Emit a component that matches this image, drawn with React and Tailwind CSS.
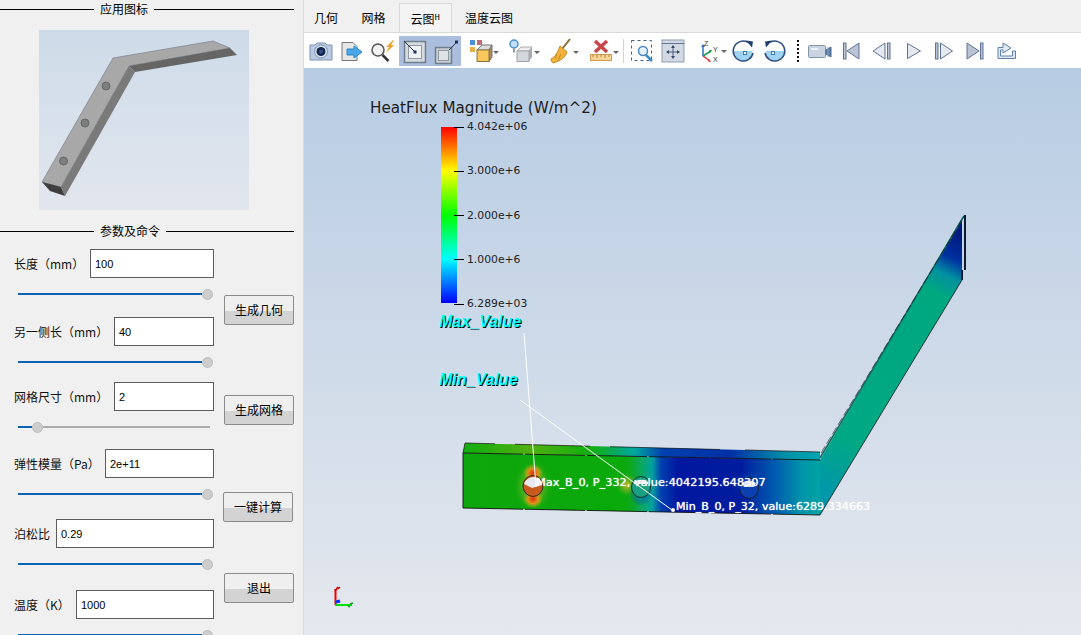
import React from 'react';

const cjk = '"Noto Sans CJK SC", "Liberation Sans", sans-serif';

const params = [
  { label: '长度（mm）', value: '100', inputWidth: 'w-[124px]', top: 'mt-[9px]' },
  { label: '另一侧长（mm）', value: '40', inputWidth: 'w-[100px]', top: 'mt-[17px]' },
  { label: '网格尺寸（mm）', value: '2', inputWidth: 'w-[100px]', top: 'mt-[14px]', low: true },
  { label: '弹性模量（Pa）', value: '2e+11', inputWidth: 'w-[109px]', top: 'mt-[16px]' },
  { label: '泊松比', value: '0.29', inputWidth: 'w-[158px]', top: 'mt-[19px]' },
  { label: '温度（K）', value: '1000', inputWidth: 'w-[138px]', top: 'mt-[20px]' },
];

const buttons = [
  { label: '生成几何', cls: 'mt-[55px]' },
  { label: '生成网格', cls: 'mt-[70px]' },
  { label: '一键计算', cls: 'mt-[67px] -ml-px' },
  { label: '退出', cls: 'mt-[51px]' },
];

const tabs = [
  { label: '几何', cls: 'w-[44px]' },
  { label: '网格', cls: 'w-[51px]' },
  { label: '云图', key: 'H', cls: 'w-[53px] h-[29px] bg-[#f4f4f4] border border-b-0 border-[#d9d9d9]' },
  { label: '温度云图', cls: 'w-[74px]' },
];

// toolbar icons are drawn in page coordinates, x and w give the slot
const Tool = ({ x, w, active, children }) => (
  <div className={`h-[30px] shrink-0 ${active ? 'bg-[#abbedd]' : ''}`} style={{ width: w }}>
    <svg width={w} height={30} viewBox={`${x} 36 ${w} 30`}>{children}</svg>
  </div>
);

const Caret = ({ x, y }) => <path d={`M${x} ${y}h6l-3 3z`} fill="#666" />;

const stepFill = '#b9c3d4';
const stepLine = '#5f7396';

const tools = [
  { x: 306, w: 30, icon: (
    <g>
      <path d="M310 45h5l2-2h8l2 2h5v15h-22z" fill="#b8cbe2" stroke="#7f93ad" />
      <circle cx="321" cy="51.500" r="6.500" fill="#dce6f2" stroke="#7d92ad" />
      <circle cx="321" cy="51.500" r="4.500" fill="#13254f" />
      <circle cx="321" cy="51.500" r="2" fill="#34508a" />
    </g>
  ) },
  { x: 336, w: 30, icon: (
    <g>
      <path d="M342 42.500h11l4 4v14h-15z" fill="#e6e6e6" stroke="#777" />
      <path d="M347 49h7v-3l8 6-8 6v-3h-7z" fill="#4aa6e6" stroke="#2a86c8" />
    </g>
  ) },
  { x: 366, w: 33, icon: (
    <g>
      <circle cx="378" cy="50" r="6" fill="#f2f2f2" stroke="#555" strokeWidth="1.500" />
      <path d="M382.500 55l6 6" stroke="#333" strokeWidth="2.500" />
      <path d="M393 40l-7 7h3l-3 6 8-8h-3l3-5z" fill="#f0a030" />
    </g>
  ) },
  { x: 399, w: 31, active: true, icon: (
    <g>
      <rect x="404.500" y="41.500" width="21" height="21" fill="#d5dadf" stroke="#6f7f90" strokeWidth="1.500" />
      <rect x="408.500" y="45.500" width="13" height="13" fill="#eef0f2" stroke="#8f9aa5" />
      <path d="M404 41l11 11" stroke="#24364f" />
      <rect x="413.500" y="50.500" width="3" height="3" fill="#14345f" />
    </g>
  ) },
  { x: 430, w: 31, active: true, icon: (
    <g>
      <rect x="435.500" y="47.500" width="16" height="16" fill="#c8ccd0" stroke="#6f7f90" strokeWidth="1.500" />
      <rect x="438.500" y="50.500" width="10" height="10" fill="#dfe2e4" stroke="#8f9aa5" />
      <path d="M449 50l8-8" stroke="#24364f" />
      <rect x="455" y="40.500" width="3" height="3" fill="#14345f" />
    </g>
  ) },
  { x: 461, w: 7 },
  { x: 468, w: 39, icon: (
    <g>
      <rect x="470" y="40" width="5" height="5" fill="#4c8fd6" />
      <rect x="477" y="40" width="5" height="5" fill="#c06a78" />
      <rect x="470" y="47" width="5" height="5" fill="#e8b04a" />
      <path d="M477 50l5-5h10l-3 5z" fill="#ddd" stroke="#777" />
      <path d="M492 45v12l-3 4.500v-11.500z" fill="#a98b5c" stroke="#777" />
      <rect x="477" y="50" width="12" height="11.500" fill="#f8c85c" stroke="#8c7440" />
      <Caret x={493} y={51} />
    </g>
  ) },
  { x: 507, w: 41, icon: (
    <g>
      <circle cx="514" cy="44" r="4" fill="#bfe0f8" stroke="#4a90d0" strokeWidth="1.500" />
      <path d="M514 48.500v4" stroke="#777" strokeWidth="1.500" />
      <path d="M517 51l4-4h11l-3 4z" fill="#eee" stroke="#aaa" />
      <rect x="517" y="51" width="12" height="10.500" fill="#d4d7dc" stroke="#a0a4aa" />
      <path d="M529 51l3-4v10l-3 4.500z" fill="#a8adb5" />
      <Caret x={534} y={51} />
    </g>
  ) },
  { x: 548, w: 38, icon: (
    <g>
      <path d="M570 39l-8 10" stroke="#8a6a3a" strokeWidth="2" />
      <path d="M560 46l7 6c-2 6-7 9-14 11-1-1-2-2-2-4 4-2 7-7 9-13z" fill="#f2b33c" stroke="#c88a20" />
      <path d="M557 54l-2 5M561 54l-3 6" stroke="#c88a20" />
      <Caret x={573} y={51} />
    </g>
  ) },
  { x: 586, w: 36, icon: (
    <g>
      <path d="M595 41l12 11M607 41l-12 11" stroke="#c8454a" strokeWidth="3.500" />
      <rect x="590.500" y="54.500" width="21" height="6" fill="#f7d69a" stroke="#d19a50" />
      <path d="M593 55v2M597 55v3M601 55v2M605 55v3M609 55v2" stroke="#b07a30" />
      <Caret x={613} y={51} />
    </g>
  ) },
  { x: 622, w: 6, icon: <path d="M623.500 39v24" stroke="#d4d4d4" /> },
  { x: 628, w: 29, icon: (
    <g>
      <rect x="631.500" y="40.500" width="20" height="20" fill="none" stroke="#3f5f88" strokeDasharray="3 3" />
      <circle cx="643" cy="51" r="4.500" fill="#e8f2fb" stroke="#4a86c0" strokeWidth="1.500" />
      <path d="M646 55l6 6" stroke="#3d88c8" strokeWidth="2.500" />
    </g>
  ) },
  { x: 657, w: 32, icon: (
    <g>
      <rect x="662" y="40" width="22" height="22" fill="#d3d9e2" stroke="#8c9bb0" />
      <path d="M662 43.500h22" stroke="#5f7396" />
      <path d="M673 46v12M667 52h12" stroke="#4b5f80" />
      <path d="M673 45l-2 3h4zM673 59l-2-3h4zM666 52l3-2v4zM680 52l-3-2v4z" fill="#34486a" />
    </g>
  ) },
  { x: 689, w: 8 },
  { x: 697, w: 33, icon: (
    <g>
      <path d="M703 56V46" stroke="#2f6fbf" strokeWidth="1.500" />
      <path d="M703 44l-2 3h4z" fill="#2f6fbf" />
      <path d="M703 56l8-5" stroke="#1f9a50" strokeWidth="1.500" />
      <path d="M712 50l-3 0 1 3z" fill="#1f9a50" />
      <path d="M703 56l7 5" stroke="#d83030" strokeWidth="1.500" />
      <path d="M711 62l-3-.500 1-2z" fill="#d83030" />
      <text x="704" y="46" fontSize="7" fontFamily="Liberation Sans, sans-serif" fill="#333">Z</text>
      <text x="713" y="52" fontSize="7" fontFamily="Liberation Sans, sans-serif" fill="#333">Y</text>
      <text x="713" y="62" fontSize="7" fontFamily="Liberation Sans, sans-serif" fill="#333">X</text>
      <Caret x={721} y={50} />
    </g>
  ) },
  { x: 730, w: 28, icon: (
    <g>
      <path d="M733.500 51a9.500 9.500 0 0 0 19 0z" fill="#9fd4f2" />
      <rect x="743.500" y="51.500" width="3" height="3" fill="#fff" stroke="#3a78b8" />
      <path d="M753 53A10 10 0 1 1 748 42.300" fill="none" stroke="#2d4f7f" strokeWidth="1.500" />
      <path d="M746 40.500l7 1-1 6z" fill="#1f3f70" />
    </g>
  ) },
  { x: 758, w: 32, icon: (
    <g>
      <path d="M765.500 51a9.500 9.500 0 0 0 19 0z" fill="#9fd4f2" />
      <rect x="771.500" y="51.500" width="3" height="3" fill="#fff" stroke="#3a78b8" />
      <path d="M765 53A10 10 0 1 0 770 42.300" fill="none" stroke="#2d4f7f" strokeWidth="1.500" />
      <path d="M772 40.500l-7 1 1 6z" fill="#1f3f70" />
    </g>
  ) },
  { x: 790, w: 16, icon: <path d="M798 40v24" stroke="#111" strokeWidth="2" strokeDasharray="2 2" /> },
  { x: 806, w: 30, icon: (
    <g>
      <rect x="808.500" y="45.500" width="17" height="12" rx="1" fill="#c9d2df" stroke="#8494ad" />
      <rect x="811" y="48" width="7" height="2" fill="#eef1f5" />
      <path d="M826 50l5-3v10l-5-3z" fill="#5a7ca8" stroke="#4a6a98" />
      <path d="M828 47v10" stroke="#90a8c8" />
    </g>
  ) },
  { x: 836, w: 30, icon: (
    <g>
      <rect x="843.500" y="43" width="2.500" height="16" fill={stepFill} stroke={stepLine} />
      <path d="M847 51l12-8v16z" fill={stepFill} stroke={stepLine} />
    </g>
  ) },
  { x: 866, w: 32, icon: (
    <g>
      <path d="M873 51l12-8v16z" fill="#e4e8ef" stroke={stepLine} />
      <rect x="887.500" y="43" width="2.500" height="16" fill={stepFill} stroke={stepLine} />
    </g>
  ) },
  { x: 898, w: 32, icon: <path d="M907.500 43.500l13 7.500-13 7.500z" fill="#e4e8ef" stroke={stepLine} /> },
  { x: 930, w: 30, icon: (
    <g>
      <rect x="935.500" y="43" width="2.500" height="16" fill={stepFill} stroke={stepLine} />
      <path d="M940.500 43l12 8-12 8z" fill="#e4e8ef" stroke={stepLine} />
    </g>
  ) },
  { x: 960, w: 30, icon: (
    <g>
      <path d="M967 43l12 8-12 8z" fill={stepFill} stroke={stepLine} />
      <rect x="980.500" y="43" width="2.500" height="16" fill={stepFill} stroke={stepLine} />
    </g>
  ) },
  { x: 990, w: 32, icon: (
    <path d="M998 58.500V47.500H1003V43L1011 48L1003 53V50H1000.500V56H1012.500V51H1015.500V58.500Z" fill="#dfe8f3" stroke="#5f7fa8" />
  ) },
];

const GroupTitle = ({ title, cls }) => (
  <div className={`flex items-center h-[18px] w-[294px] ${cls}`}>
    <div className="w-[94px] h-px bg-black" />
    <span className="px-[6px] text-[12px] text-black">{title}</span>
    <div className="flex-1 h-px bg-black" />
  </div>
);

const Slider = ({ low }) => (
  <div className="flex items-center h-3 mt-[10px] ml-[18px]">
    <div className={`h-[2px] bg-[#0b63b6] ${low ? 'w-[14px]' : 'w-[184px]'}`} />
    <div className="w-[11px] h-[11px] rounded-full bg-[#cdcdcd] border border-[#bcbcbc] shrink-0" />
    {low && <div className="h-[2px] w-[167px] bg-[#ababab]" />}
  </div>
);

const Param = ({ label, value, inputWidth, top, low }) => (
  <div className={top}>
    <div className="flex items-center justify-between w-[214px] h-[29px] pl-[14px]">
      <span className="text-[12px] text-[#111] whitespace-nowrap">{label}</span>
      <input
        readOnly
        value={value}
        className={`${inputWidth} h-[29px] border border-[#5c5c5c] bg-white pl-1 text-[11px] text-black outline-none font-['Liberation_Sans',sans-serif]`}
      />
    </div>
    <Slider low={low} />
  </div>
);

const AppIcon = () => (
  <svg width="210" height="180" viewBox="39 30 210 180" className="block">
    <defs>
      <linearGradient id="iconBg" x1="0" y1="0" x2="0" y2="1">
        <stop offset="0" stopColor="#cddbe8" />
        <stop offset="1" stopColor="#e2e6ee" />
      </linearGradient>
    </defs>
    <rect x="39" y="30" width="210" height="180" fill="url(#iconBg)" />
    <path d="M42 182L113 58L213 41L230 48L129 66L61 187z" fill="#a8a8a8" stroke="#7d8088" strokeWidth="0.700" />
    <path d="M129 66L135 72L65 196L61 187z" fill="#7a7a7a" />
    <path d="M129 66L230 48L237 55L135 72z" fill="#656565" />
    <path d="M42 182L61 187L65 196L50 191z" fill="#3e3e3e" />
    <circle cx="106" cy="86" r="4" fill="#7c7f7e" stroke="#666" />
    <circle cx="85" cy="123" r="4" fill="#7c7f7e" stroke="#666" />
    <circle cx="63.500" cy="161" r="4" fill="#7c7f7e" stroke="#666" />
  </svg>
);

const Model = () => (
  <svg width="777" height="567" viewBox="304 68 777 567" className="absolute left-0 top-0">
    <defs>
      <linearGradient id="front" gradientUnits="userSpaceOnUse" x1="463" y1="0" x2="820" y2="0">
        <stop offset="0" stopColor="#0ea60c" />
        <stop offset="0.450" stopColor="#0aaa0a" />
        <stop offset="0.470" stopColor="#0fa81e" />
        <stop offset="0.500" stopColor="#0aa860" />
        <stop offset="0.530" stopColor="#00a0a0" />
        <stop offset="0.555" stopColor="#0040b0" />
        <stop offset="0.600" stopColor="#0018a0" />
        <stop offset="0.780" stopColor="#001c9e" />
        <stop offset="0.880" stopColor="#0060b0" />
        <stop offset="0.950" stopColor="#0095a8" />
        <stop offset="1" stopColor="#00a4a4" />
      </linearGradient>
      <linearGradient id="topFace" gradientUnits="userSpaceOnUse" x1="463" y1="0" x2="820" y2="0">
        <stop offset="0" stopColor="#10ac10" />
        <stop offset="0.190" stopColor="#50b010" />
        <stop offset="0.360" stopColor="#10ae10" />
        <stop offset="0.480" stopColor="#00a8a0" />
        <stop offset="0.560" stopColor="#0040b0" />
        <stop offset="0.750" stopColor="#0030a8" />
        <stop offset="0.900" stopColor="#0090a8" />
        <stop offset="1" stopColor="#00a8b0" />
      </linearGradient>
      <linearGradient id="leg" gradientUnits="userSpaceOnUse" x1="828" y1="495" x2="958" y2="235">
        <stop offset="0.020" stopColor="#0098a8" />
        <stop offset="0.200" stopColor="#00a884" />
        <stop offset="0.790" stopColor="#00a880" />
        <stop offset="0.860" stopColor="#0090a0" />
        <stop offset="0.920" stopColor="#0030a0" />
        <stop offset="1" stopColor="#001a80" />
      </linearGradient>
      <radialGradient id="hot">
        <stop offset="0" stopColor="#d83010" />
        <stop offset="0.500" stopColor="#e09018" />
        <stop offset="1" stopColor="#a0b810" stopOpacity="0" />
      </radialGradient>
      <radialGradient id="warm">
        <stop offset="0" stopColor="#c8b820" />
        <stop offset="0.600" stopColor="#60b020" stopOpacity="0.600" />
        <stop offset="1" stopColor="#10a810" stopOpacity="0" />
      </radialGradient>
      <radialGradient id="cool">
        <stop offset="0" stopColor="#00a0c0" />
        <stop offset="1" stopColor="#0030a8" stopOpacity="0" />
      </radialGradient>
      <clipPath id="frontClip">
        <path d="M463 453L820 460L820 515L463 508z" />
      </clipPath>
    </defs>
    <path d="M465 443L820 452L820 460L463 453z" fill="url(#topFace)" />
    <path d="M463 453L820 460L820 515L463 508z" fill="url(#front)" />
    <g clipPath="url(#frontClip)">
      <ellipse cx="533" cy="486" rx="20" ry="27" fill="url(#warm)" />
      <ellipse cx="533" cy="473" rx="10" ry="9" fill="url(#hot)" />
      <ellipse cx="533" cy="499" rx="10" ry="9" fill="url(#hot)" />
      <ellipse cx="627" cy="485" rx="12" ry="12" fill="url(#warm)" />
      <ellipse cx="641" cy="494" rx="12" ry="12" fill="url(#cool)" />
      <ellipse cx="750" cy="484" rx="20" ry="16" fill="url(#cool)" opacity="0.450" />
    </g>
    <path d="M820 460L962 218L962 280L820 515z" fill="url(#leg)" />
    <path d="M820 458L964 216" stroke="#0d6a62" strokeWidth="1.500" />
    <path d="M821 453L965 215" stroke="#111" strokeWidth="0.600" strokeDasharray="8 3" />
    <path d="M820 515L962 280" stroke="#111" strokeWidth="0.800" />
    <path d="M965 215V270M962 270V280" stroke="#0d1c33" strokeWidth="2" />
    <path d="M463 453V508M463 508L820 515M463 453L820 460" fill="none" stroke="#111" strokeWidth="0.900" strokeDasharray="60 2" />
    <path d="M465 443L463 453M465 443L495 443.800M515 444.300L590 446.200M610 446.700L720 449.500M745 450L820 452" fill="none" stroke="#111" strokeWidth="0.700" />
    <ellipse cx="533" cy="486" rx="10" ry="10.500" fill="#c85a1e" stroke="#111" strokeWidth="0.800" />
    <path d="M524 484a10 9 0 0 1 16-5l2 6-10 3z" fill="#e8e8f0" />
    <ellipse cx="641" cy="487" rx="9.500" ry="10.500" fill="#1aa080" stroke="#111" strokeWidth="0.800" />
    <path d="M634 482a9 6 0 0 1 14 0l0 2h-14z" fill="#e8e8f0" />
    <ellipse cx="749" cy="488" rx="9.500" ry="10.500" fill="#0c40b0" stroke="#111" strokeWidth="0.800" />
    <path d="M742 483a9 6 0 0 1 14 0l-2 4h-10z" fill="#e0e4ee" />
    <path d="M524 333L536 487" stroke="#fff" />
    <path d="M520 400L672 510" stroke="#fff" />
    <circle cx="673" cy="510" r="2" fill="#fff" />
    <circle cx="537" cy="484" r="2" fill="#fff" />
    {/* triad */}
    <path d="M335.500 605V589" stroke="#f00000" strokeWidth="2" />
    <path d="M335 605H352" stroke="#00e000" strokeWidth="2" />
    <path d="M336 602L340 601" stroke="#0030ff" strokeWidth="3" />
    <path d="M335 591l3-4M338 589l2-2" stroke="#c80000" strokeWidth="1.500" />
    <path d="M348 606l2 1M350 604l3-1" stroke="#10a030" strokeWidth="1.500" />
  </svg>
);

const ticks = ['4.042e+06', '3.000e+6', '2.000e+6', '1.000e+6', '6.289e+03'];

const ColorBar = () => (
  <div className="absolute left-[137px] top-[59px] flex">
    <div className="w-[16px] h-[176px] bg-[linear-gradient(#ff0000,#ffff00_25%,#00ff00_50%,#00ffff_75%,#0000ff)]" />
    <div className="flex flex-col justify-between h-[187px] -mt-[5px] -ml-[3px]">
      {ticks.map((t) => (
        <div key={t} className="flex items-center h-[10px]">
          <div className="w-[10px] h-px bg-black" />
          <span className="ml-[3px] text-[10.800px] leading-[10px] text-[#222] whitespace-nowrap">{t}</span>
        </div>
      ))}
    </div>
  </div>
);

const App = () => {
  return (
    <div className="flex h-screen w-full overflow-hidden bg-[#f0f0f0]" style={{ fontFamily: cjk }}>
      {/* left panel */}
      <div className="w-[303px] shrink-0">
        <GroupTitle title="应用图标" cls="mt-0" />
        <div className="ml-[39px] mt-[12px]">
          <AppIcon />
        </div>
        <GroupTitle title="参数及命令" cls="mt-[12px]" />
        <div className="flex">
          <div className="w-[224px] shrink-0">
            {params.map((p) => (
              <Param key={p.label} {...p} />
            ))}
          </div>
          <div className="flex flex-col items-start">
            {buttons.map((b) => (
              <button
                key={b.label}
                className={`${b.cls} w-[70px] h-[30px] rounded-[2px] border border-[#8b8b8b] text-[12px] text-black bg-[linear-gradient(#efefef_52%,#d3d3d3_52%)]`}
              >
                {b.label}
              </button>
            ))}
          </div>
        </div>
      </div>

      {/* right panel */}
      <div className="flex-1 flex flex-col min-w-0 border-l border-[#dcdcdc]">
        <div className="flex items-end h-[33px] shrink-0 border-b border-[#d9d9d9]">
          {tabs.map((t) => (
            <div key={t.label} className={`${t.cls} flex items-center justify-center h-[29px] pt-px text-[12px] text-black`}>
              {t.label}
              {t.key && <span className="text-[9px] w-[6px] font-['Liberation_Mono',monospace]">{t.key}</span>}
            </div>
          ))}
        </div>
        <div className="flex h-[35px] shrink-0 bg-white pt-[3px] pl-[2px]">
          {tools.map((t) => (
            <Tool key={t.x} x={t.x} w={t.w} active={t.active}>{t.icon}</Tool>
          ))}
        </div>
        <div className="relative flex-1 bg-[linear-gradient(#b7cce3,#e5e8ee)] font-['DejaVu_Sans',sans-serif]">
          <Model />
          <div className="absolute left-[66px] top-[30px] text-[15.200px] leading-5 text-[#1c1c1c] whitespace-nowrap">
            HeatFlux Magnitude (W/m^2)
          </div>
          <ColorBar />
          <div className="absolute left-[135px] top-[244px] font-['Liberation_Sans',sans-serif] text-[16px] leading-5 font-bold italic text-[#00ffff] [text-shadow:1px_1px_0_#000]">
            Max_Value
          </div>
          <div className="absolute left-[135px] top-[302px] font-['Liberation_Sans',sans-serif] text-[16px] leading-5 font-bold italic text-[#00ffff] [text-shadow:1px_1px_0_#000]">
            Min_Value
          </div>
          <div className="absolute left-[232px] top-[405px] text-[11.300px] leading-5 text-white whitespace-nowrap [text-shadow:0_0_1px_#fff]">
            Max_B_0, P_332, value:4042195.648307
          </div>
          <div className="absolute left-[372px] top-[429px] text-[11.100px] leading-5 text-white whitespace-nowrap [text-shadow:0_0_1px_#fff]">
            Min_B_0, P_32, value:6289.334663
          </div>
        </div>
      </div>
    </div>
  );
};

export default App;
